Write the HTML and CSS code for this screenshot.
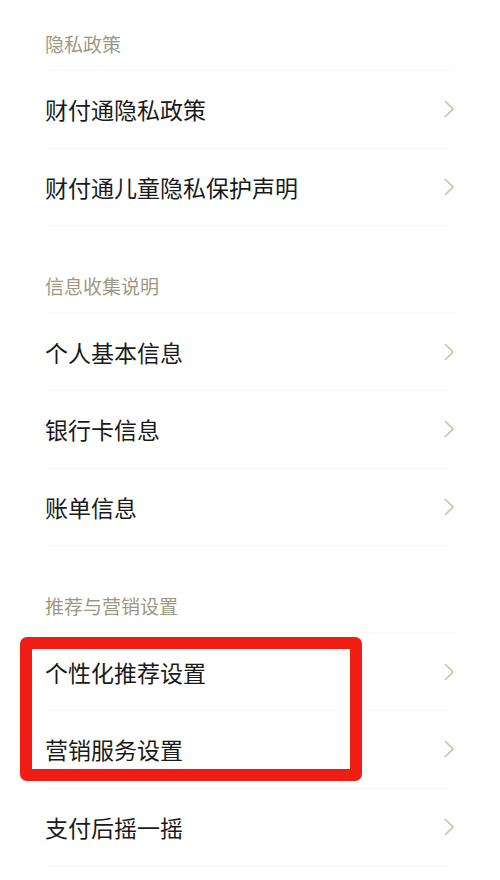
FILE: index.html
```html
<!DOCTYPE html>
<html lang="zh-CN">
<head>
    <meta charset="UTF-8">
    <meta name="viewport" content="width=device-width, initial-scale=1.0">
    <title>隐私设置</title>
    <link rel="stylesheet" href="styles.css">
</head>
<body>
    <div class="section first">
        <div class="section-title">隐私政策</div>
        <div class="row"><span>财付通隐私政策</span><svg class="arrow" viewBox="0 0 10 18"><polyline points="1,1 9,9 1,17"/></svg></div>
        <div class="row"><span>财付通儿童隐私保护声明</span><svg class="arrow" viewBox="0 0 10 18"><polyline points="1,1 9,9 1,17"/></svg></div>
    </div>

    <div class="section">
        <div class="section-title">信息收集说明</div>
        <div class="row"><span>个人基本信息</span><svg class="arrow" viewBox="0 0 10 18"><polyline points="1,1 9,9 1,17"/></svg></div>
        <div class="row"><span>银行卡信息</span><svg class="arrow" viewBox="0 0 10 18"><polyline points="1,1 9,9 1,17"/></svg></div>
        <div class="row"><span>账单信息</span><svg class="arrow" viewBox="0 0 10 18"><polyline points="1,1 9,9 1,17"/></svg></div>
    </div>

    <div class="section">
        <div class="section-title">推荐与营销设置</div>
        <div class="marked">
            <div class="row"><span>个性化推荐设置</span><svg class="arrow" viewBox="0 0 10 18"><polyline points="1,1 9,9 1,17"/></svg></div>
            <div class="row"><span>营销服务设置</span><svg class="arrow" viewBox="0 0 10 18"><polyline points="1,1 9,9 1,17"/></svg></div>
        </div>
        <div class="row"><span>支付后摇一摇</span><svg class="arrow" viewBox="0 0 10 18"><polyline points="1,1 9,9 1,17"/></svg></div>
    </div>
</body>
</html>
```

FILE: styles.css
```css
body {
    margin: 0;
    background: #ffffff;
    font-family: 'Noto Sans CJK SC', 'Noto Sans', sans-serif;
    color: #1a1a1a;
}

.section {
    margin-top: 16px;
}

.section.first {
    margin-top: 0;
}

.section-title {
    margin: 0 45px;
    padding: 31px 0 13px;
    font-size: 19px;
    line-height: 26px;
    color: #9d9883;
    border-bottom: 1px solid #fbfaf4;
}

.row {
    margin: 0 46px 0 45px;
    height: 76.7px;
    display: flex;
    justify-content: space-between;
    align-items: center;
    font-size: 23px;
    border-bottom: 1px solid #fbfaf4;
}

.arrow {
    width: 10px;
    height: 18px;
    fill: none;
    stroke: #c9c2ac;
    stroke-width: 1.7;
}

.marked {
    position: relative;
}

.marked::after {
    content: '';
    position: absolute;
    top: 4px;
    bottom: 8px;
    left: 20px;
    width: 318px;
    border: 12px solid #f01d14;
    border-radius: 7px;
}
```
